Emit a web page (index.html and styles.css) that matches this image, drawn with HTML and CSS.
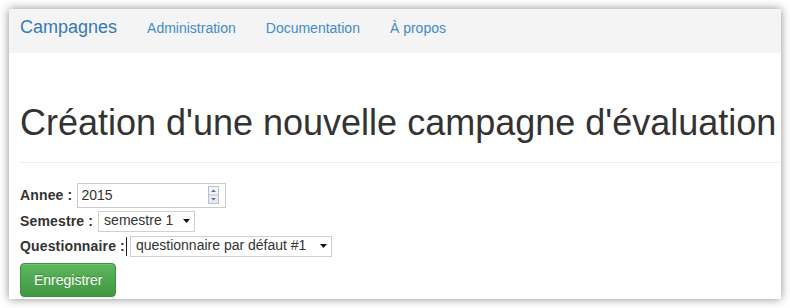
FILE: index.html
```html
<!DOCTYPE html>
<html lang="fr">
<head>
<meta charset="utf-8">
<title>Campagnes</title>
<link rel="stylesheet" href="styles.css">
</head>
<body>
<div class="window">
  <nav class="navbar">
    <a class="brand" href="#">Campagnes</a>
    <ul class="nav">
      <li><a href="#">Administration</a></li>
      <li><a href="#">Documentation</a></li>
      <li><a href="#">À propos</a></li>
    </ul>
  </nav>
  <main class="content">
    <div class="page-header">
      <h1>Création d'une nouvelle campagne d'évaluation</h1>
    </div>
    <form class="form">
      <div class="row row-year">
        <label class="label" for="annee">Annee :</label>
        <span class="number-field">
          <input class="number-input" id="annee" type="text" value="2015">
          <svg class="spinner" width="11" height="18" viewBox="0 0 11 18" aria-hidden="true">
            <defs>
              <linearGradient id="sp" x1="0" y1="0" x2="0" y2="1">
                <stop offset="0" stop-color="#f7f9fb"/>
                <stop offset="1" stop-color="#e4e9ee"/>
              </linearGradient>
            </defs>
            <rect x="0.5" y="0.5" width="10" height="17" fill="url(#sp)" stroke="#b9c2cc"/>
            <line x1="0.5" y1="9" x2="10.5" y2="9" stroke="#b9c2cc"/>
            <path d="M3 6 L5.5 3.5 L8 6 Z" fill="#4d72b3"/>
            <path d="M3 12 L5.5 14.5 L8 12 Z" fill="#4d72b3"/>
          </svg>
        </span>
      </div>
      <div class="row row-semester">
        <label class="label">Semestre :</label>
        <span class="select select-semester" role="combobox" aria-expanded="false">
          <span class="select-value">semestre 1</span>
          <svg class="caret" width="7" height="4" viewBox="0 0 7 4" aria-hidden="true"><path d="M0 0 H7 L3.5 4 Z" fill="#111"/></svg>
        </span>
      </div>
      <div class="row row-questionnaire">
        <label class="label">Questionnaire :</label>
        <span class="text-cursor"></span>
        <span class="select select-questionnaire" role="combobox" aria-expanded="false">
          <span class="select-value">questionnaire par défaut #1</span>
          <svg class="caret" width="7" height="4" viewBox="0 0 7 4" aria-hidden="true"><path d="M0 0 H7 L3.5 4 Z" fill="#111"/></svg>
        </span>
      </div>
      <div class="row">
        <button class="btn btn-success" type="button">Enregistrer</button>
      </div>
    </form>
  </main>
</div>
</body>
</html>
```
FILE: styles.css
```css
* {
  box-sizing: border-box;
}

html,
body {
  margin: 0;
  padding: 0;
  background: #ffffff;
}

body {
  padding: 9px;
  height: 308px;
  font-family: "Liberation Sans", Arial, Helvetica, sans-serif;
  font-size: 14px;
  line-height: 20px;
  color: #333333;
}

.window {
  height: 290px;
  background: #ffffff;
  box-shadow: 0 0 9px rgba(0, 0, 0, 0.45);
  overflow: hidden;
}

/* Navbar */
.navbar {
  display: flex;
  align-items: baseline;
  height: 44px;
  padding: 8px 0 0 11px;
  background: #f4f4f4;
}

.brand {
  font-size: 18px;
  line-height: 20px;
  color: #337ab7;
  text-decoration: none;
  padding-right: 15px;
}

.nav {
  display: flex;
  list-style: none;
  margin: 0;
  padding: 0;
}

.nav a {
  display: block;
  padding: 0 15px;
  color: #428bca;
  text-decoration: none;
}

/* Content */
.content {
  padding: 50px 0 0 11px;
}

.page-header {
  padding-bottom: 19px;
  border-bottom: 1px solid #eeeeee;
  margin-bottom: 20px;
}

.page-header h1 {
  margin: 0;
  font-size: 36px;
  line-height: 1.1;
  font-weight: 500;
  color: #333333;
  white-space: nowrap;
}

/* Form */
.form {
  display: flex;
  flex-direction: column;
  align-items: flex-start;
}

.row {
  display: flex;
  align-items: center;
}

.row-year {
  margin-bottom: 3px;
}

.row-semester {
  margin-bottom: 4px;
}

.row-questionnaire {
  margin-bottom: 6px;
}

.label {
  font-weight: bold;
  letter-spacing: 0.15px;
  margin-right: 5px;
}

.number-field {
  display: flex;
  align-items: center;
  width: 149px;
  height: 25px;
  padding: 0 6px 0 3px;
  border: 1px solid #cbcbcb;
  background: #ffffff;
}

.number-input {
  flex: 1;
  min-width: 0;
  height: 23px;
  padding: 0;
  border: 0;
  outline: none;
  font: 14px "Liberation Sans", Arial, Helvetica, sans-serif;
  color: #333333;
  background: transparent;
}

.spinner {
  display: block;
  flex: none;
}

.select {
  display: flex;
  align-items: center;
  height: 21px;
  padding: 0 4px 0 5px;
  border: 1px solid #cfcfcf;
  background: #ffffff;
  color: #333333;
  line-height: 16px;
}

.select-semester {
  width: 97px;
}

.select-questionnaire {
  width: 202px;
}

.select-value {
  white-space: nowrap;
  position: relative;
  top: -1px;
}

.caret {
  display: block;
  flex: none;
  margin-left: auto;
}

.text-cursor {
  display: block;
  width: 1px;
  height: 19px;
  margin: 0 3px 0 -4px;
  background: #222222;
}

/* Button */
.btn {
  display: inline-block;
  padding: 6px 13px;
  font-family: "Liberation Sans", Arial, Helvetica, sans-serif;
  font-size: 14px;
  line-height: 20px;
  border-radius: 4px;
  cursor: pointer;
}

.btn-success {
  color: #ffffff;
  border: 1px solid #3e8f3e;
  background: linear-gradient(to bottom, #5cb85c 0, #419641 100%);
  text-shadow: 0 -1px 0 rgba(0, 0, 0, 0.2);
  box-shadow: inset 0 1px 0 rgba(255, 255, 255, 0.15), 0 1px 1px rgba(0, 0, 0, 0.075);
}
```
